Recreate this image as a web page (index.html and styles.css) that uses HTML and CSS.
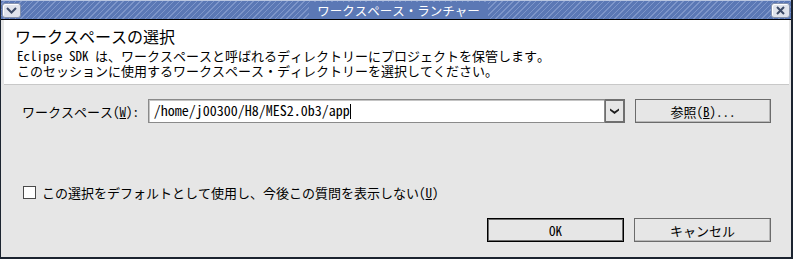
FILE: index.html
```html
<!DOCTYPE html>
<html lang="ja">
<head>
  <meta charset="UTF-8" />
  <title>ワークスペース・ランチャー</title>
  <link rel="stylesheet" href="styles.css">
</head>
<body>
  <div class="window">
    <div class="titlebar">
      <div class="tb-btn">
        <svg width="11" height="7" viewBox="0 0 11 7"><path d="M1 1 L5.5 5.5 L10 1" fill="none" stroke="#3c4a66" stroke-width="2"/></svg>
      </div>
      <div class="tb-title"><span>ワークスペース・ランチャー</span></div>
      <div class="tb-btn">
        <svg width="9" height="9" viewBox="0 0 9 9"><path d="M1 1 L8 8 M8 1 L1 8" fill="none" stroke="#3c4a66" stroke-width="2"/></svg>
      </div>
    </div>

    <div class="banner">
      <div class="banner-title">ワークスペースの選択</div>
      <div class="banner-desc">
        <div>Eclipse SDK は、ワークスペースと呼ばれるディレクトリーにプロジェクトを保管します。</div>
        <div>このセッションに使用するワークスペース・ディレクトリーを選択してください。</div>
      </div>
    </div>

    <div class="content">
      <div class="ws-row">
        <label class="ws-label">ワークスペース(<u>W</u>):</label>
        <div class="combo">
          <div class="combo-field">/home/j00300/H8/MES2.0b3/app<span class="caret"></span></div>
          <div class="combo-drop">
            <svg width="9" height="6" viewBox="0 0 9 6"><path d="M0 0.5 L4.5 3.5 L9 0.5 L9 2.5 L4.5 6 L0 2.5 Z" fill="#1e1e1e"/></svg>
          </div>
        </div>
        <button class="btn browse">参照(<u>B</u>)...</button>
      </div>

      <div class="check-row">
        <span class="checkbox"></span>
        <span>この選択をデフォルトとして使用し、今後この質問を表示しない(<u>U</u>)</span>
      </div>

      <div class="actions">
        <button class="btn default">OK</button>
        <button class="btn">キャンセル</button>
      </div>
    </div>
  </div>
</body>
</html>
```

FILE: styles.css
```css
* { box-sizing: border-box; }
html, body {
  margin: 0;
  padding: 0;
  background: #e6e6e6;
}
body {
  font-family: "Noto Sans Mono CJK JP", "Noto Sans CJK JP", monospace;
  font-size: 13px;
  color: #000;
}
.window {
  width: 793px;
  height: 259px;
  display: flex;
  flex-direction: column;
  background: #e6e6e6;
  border-left: 1px solid #1c2430;
  border-right: 2px solid #1c2430;
  border-bottom: 2px solid #1c2430;
}
.titlebar {
  height: 20px;
  display: flex;
  align-items: center;
  padding: 0 1px;
  border-top: 1px solid #b9c6e0;
  border-bottom: 1px solid #000;
  background: repeating-linear-gradient(135deg, #5b78b5 0 2px, #7d95c9 2px 3px, #5b78b5 3px 4px);
}
.tb-btn {
  width: 19px;
  height: 15px;
  display: flex;
  align-items: center;
  justify-content: center;
  background: #dfe3ec;
  border: 1px solid #8592ad;
  border-radius: 3px;
  box-shadow: inset 1px 1px 0 #fff;
}
.tb-title {
  flex: 1;
  text-align: center;
  padding-left: 5px;
}
.tb-title span {
  display: inline-block;
  background: #5b78b5;
  color: #fff;
  font-size: 12.5px;
  line-height: 17px;
  padding: 0 8px;
}
.banner {
  height: 65px;
  margin: 0 2px 0 3px;
  background: #fff;
  border-bottom: 1px solid #c8c8c8;
  padding: 7px 0 0 11px;
}
.banner-title {
  font-size: 16px;
  line-height: 18px;
}
.banner-desc {
  margin-top: 3px;
  padding-left: 2px;
  line-height: 15px;
}
.content {
  flex: 1;
  padding: 14px 20px 0 21px;
}
.ws-row {
  display: flex;
  align-items: center;
  height: 24px;
}
.ws-label {
  width: 126px;
}
.combo {
  display: flex;
  width: 478px;
  height: 24px;
}
.combo-field {
  flex: 1;
  background: #fff;
  border: 1px solid #8a8a8a;
  box-shadow: inset 1px 1px 0 #c4c4c4;
  font-size: 14px;
  line-height: 21px;
  padding-left: 5px;
}
.caret {
  display: inline-block;
  width: 1px;
  height: 15px;
  background: #000;
  vertical-align: -3px;
}
.combo-drop {
  width: 20px;
  display: flex;
  align-items: center;
  justify-content: center;
  background: #e6e6e6;
  border: 2px solid #6f6f6f;
  border-left-width: 1px;
}
.btn {
  font: inherit;
  color: #000;
  height: 24px;
  background: #e6e6e6;
  border: 1px solid #6b6b6b;
  box-shadow: inset -1px -1px 0 #b8b8b8;
  padding: 0;
  cursor: pointer;
}
.browse {
  width: 136px;
  margin-left: 10px;
}
.check-row {
  display: flex;
  align-items: center;
  gap: 6px;
  margin-top: 61px;
  height: 16px;
  padding-left: 1px;
}
.checkbox {
  width: 13px;
  height: 13px;
  background: #fff;
  border: 1px solid #4a4a4a;
}
.actions {
  display: flex;
  justify-content: flex-end;
  gap: 10px;
  margin-top: 18px;
}
.actions .btn {
  width: 137px;
}
.btn.default {
  border: 1px solid #000;
  box-shadow: inset 0 0 0 1px #6b6b6b;
}
```
